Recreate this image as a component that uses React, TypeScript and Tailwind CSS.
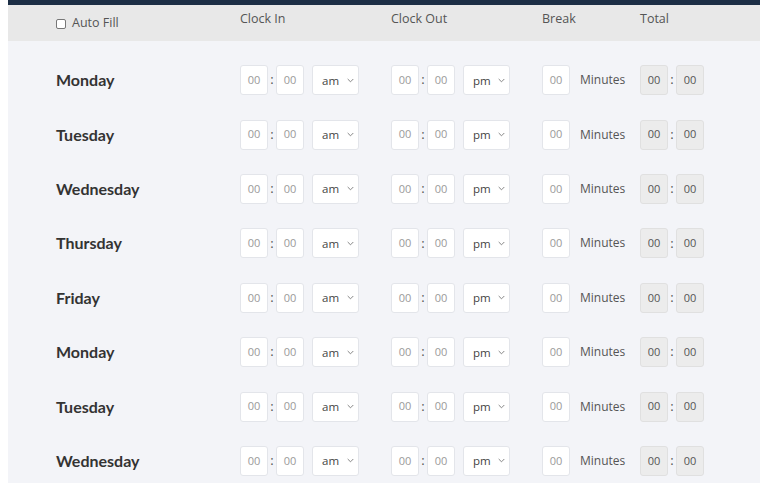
import React from "react";

const days = [
  "Monday",
  "Tuesday",
  "Wednesday",
  "Thursday",
  "Friday",
  "Monday",
  "Tuesday",
  "Wednesday",
];

const Chevron = () => (
  <svg width="7" height="5" viewBox="0 0 7 5" fill="none" className="text-[#777]">
    <path d="M0.7 1 L3.5 3.8 L6.3 1" stroke="currentColor" strokeWidth="0.9" />
  </svg>
);

const TimeBox: React.FC<{ filled?: boolean }> = ({ filled }) => (
  <div
    className={`flex h-[30px] w-[28px] items-center justify-center rounded-[3px] border text-[11px] ${
      filled
        ? "border-[#e0e0e0] bg-[#ececec] text-[#555]"
        : "border-[#e3e5ea] bg-white text-[#9a9a9a]"
    }`}
  >
    00
  </div>
);

const TimePicker: React.FC<{ meridiem: string }> = ({ meridiem }) => (
  <div className="flex items-center">
    <TimeBox />
    <span className="w-[8px] text-center text-[13px] text-[#555]">:</span>
    <TimeBox />
    <div className="ml-[8px] flex h-[30px] w-[47px] items-center rounded-[3px] border border-[#e3e5ea] bg-white pl-[9px] pr-[4px] text-[11.5px] text-[#444]">
      <span>{meridiem}</span>
      <span className="ml-auto flex">
        <Chevron />
      </span>
    </div>
  </div>
);

const Row: React.FC<{ day: string }> = ({ day }) => (
  <div className="grid h-[54.4px] grid-cols-[184px_151px_151px_98px_1fr] items-center">
    <div
      className="text-[16px] font-bold text-[#333]"
      style={{ fontFamily: "Lato, sans-serif" }}
    >
      {day}
    </div>
    <TimePicker meridiem="am" />
    <TimePicker meridiem="pm" />
    <div className="flex items-center">
      <TimeBox />
      <span className="ml-[10px] text-[12px] text-[#555]">Minutes</span>
    </div>
    <div className="flex items-center">
      <TimeBox filled />
      <span className="w-[8px] text-center text-[13px] text-[#555]">:</span>
      <TimeBox filled />
    </div>
  </div>
);

export default function App() {
  return (
    <div
      className="h-[483px] overflow-hidden bg-white px-[8px]"
      style={{ fontFamily: '"Open Sans", "Noto Sans", sans-serif' }}
    >
      <div className="h-[5px] bg-[#1c2e45]" />
      <div className="grid h-[36px] grid-cols-[184px_151px_151px_98px_1fr] bg-[#e8e8e8] pl-[48px] text-[12.5px] text-[#555]">
        <label className="flex items-center gap-[6px] pt-[1px]">
          <span className="inline-block h-[10px] w-[10px] rounded-[2px] border border-[#777] bg-white" />
          Auto Fill
        </label>
        <div className="flex items-center pb-[7px]">Clock In</div>
        <div className="flex items-center pb-[7px]">Clock Out</div>
        <div className="flex items-center pb-[7px]">Break</div>
        <div className="flex items-center pb-[7px]">Total</div>
      </div>
      <div className="h-full bg-[#f3f4f8] pl-[48px] pt-[12px]">
        {days.map((d, i) => (
          <Row key={i} day={d} />
        ))}
      </div>
    </div>
  );
}
